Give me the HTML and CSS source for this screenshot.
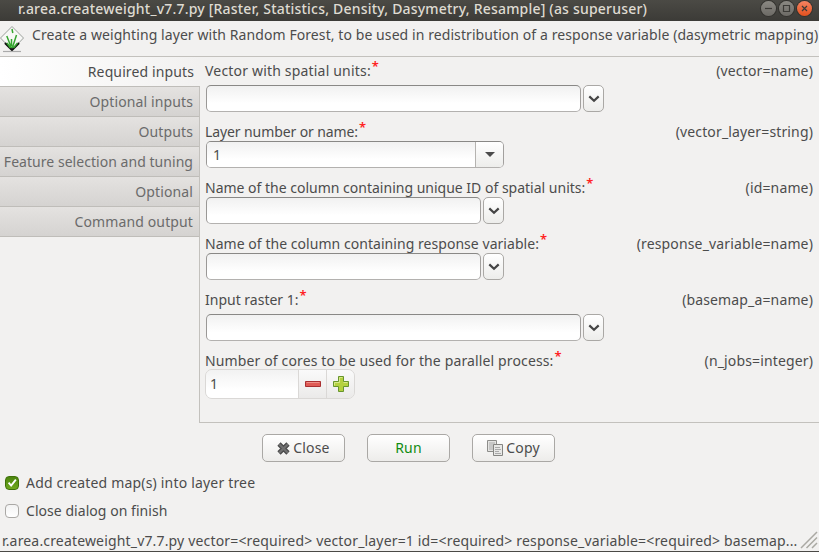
FILE: index.html
```html
<!DOCTYPE html>
<html lang="en">
<head>
<meta charset="utf-8">
<title>r.area.createweight</title>
<link rel="stylesheet" href="styles.css">
</head>
<body>
<svg width="0" height="0" class="defs">
  <symbol id="chevron" viewBox="0 0 12 8"><path d="M1.300 1.400 6 5.800l4.700-4.400" fill="none" stroke="#454545" stroke-width="2.200"/></symbol>
</svg>
<div class="window">
  <header class="titlebar">
    <span class="title">r.area.createweight_v7.7.py [Raster, Statistics, Density, Dasymetry, Resample] (as superuser)</span>
    <div class="controls">
      <span class="control"><svg viewBox="0 0 15 15"><path d="M4 7.500h7"/></svg></span>
      <span class="control"><svg viewBox="0 0 15 15"><path d="M4.500 4.500h6v6h-6z"/></svg></span>
      <span class="control control-close"><svg viewBox="0 0 15 15"><path d="m5 5 5 5m0-5-5 5"/></svg></span>
    </div>
  </header>
  <div class="description">
    <svg class="logo" viewBox="0 0 24 28">
      <path d="M12 1.500 23.500 13 12 25 .5 13z" fill="#f7f8f6" stroke="#9b9f9b"/>
      <path d="M5 18 12 25l7-7" fill="none" stroke="#111" stroke-width="2.200"/>
      <path d="M11.500 23 6.800 11M12.300 23 16.500 10M11.500 21v-7M10.500 23 7 18M13.500 23l4-5M12 4l.8 4" fill="none" stroke="#35a52f" stroke-width="1.500"/>
      <path d="M3 26.500h18" stroke="#aaa" stroke-width="1.200"/>
    </svg>
    <span class="summary">Create a weighting layer with Random Forest, to be used in redistribution of a response variable (dasymetric mapping)</span>
  </div>
  <div class="notebook">
    <nav class="tabs">
      <div class="tab tab-active">Required inputs</div>
      <div class="tab">Optional inputs</div>
      <div class="tab">Outputs</div>
      <div class="tab tab-long">Feature selection and tuning</div>
      <div class="tab">Optional</div>
      <div class="tab">Command output</div>
    </nav>
    <main class="page">
      <section class="field field-spaced">
        <div class="label-row"><label class="loose">Vector with spatial units:<b>*</b></label><span class="key">(vector=name)</span></div>
        <div class="input-row"><div class="entry entry-wide"></div><div class="drop"><svg><use href="#chevron"/></svg></div></div>
      </section>
      <section class="field">
        <div class="label-row"><label class="tight">Layer number or name:<b>*</b></label><span class="key">(vector_layer=string)</span></div>
        <div class="combo"><span class="combo-value">1</span><span class="combo-arrow"></span></div>
      </section>
      <section class="field">
        <div class="label-row"><label>Name of the column containing unique ID of spatial units:<b>*</b></label><span class="key">(id=name)</span></div>
        <div class="input-row"><div class="entry"></div><div class="drop"><svg><use href="#chevron"/></svg></div></div>
      </section>
      <section class="field">
        <div class="label-row"><label class="airy">Name of the column containing response variable:<b>*</b></label><span class="key">(response_variable=name)</span></div>
        <div class="input-row"><div class="entry"></div><div class="drop"><svg><use href="#chevron"/></svg></div></div>
      </section>
      <section class="field field-spaced">
        <div class="label-row"><label>Input raster 1:<b>*</b></label><span class="key">(basemap_a=name)</span></div>
        <div class="input-row"><div class="entry entry-wide"></div><div class="drop"><svg><use href="#chevron"/></svg></div></div>
      </section>
      <section class="field">
        <div class="label-row"><label class="wide">Number of cores to be used for the parallel process:<b>*</b></label><span class="key">(n_jobs=integer)</span></div>
        <div class="spin">
          <span class="spin-value">1</span>
          <span class="spin-button"><svg viewBox="0 0 16 16"><path d="M.5 5.500h15v5H.5z" fill="#df5b55" stroke="#a92f31"/><path d="M1.500 6.500h13" stroke="#ee918b"/></svg></span>
          <span class="spin-button"><svg viewBox="0 0 16 16"><path d="M5.500.5h5v5h5v5h-5v5h-5v-5h-5v-5h5z" fill="#b4d13f" stroke="#67952d"/><path d="M6.500 6.500v-5h3M1.500 9.500v-3h5m4 0h4" fill="none" stroke="#d8e98a"/></svg></span>
        </div>
      </section>
    </main>
  </div>
  <div class="actions">
    <button class="button"><svg class="icon-close" viewBox="0 0 13 13"><path d="m2 2 9 9m0-9-9 9" stroke="#4b4b4b" stroke-width="4.600"/><path d="m2.200 2.200 8.600 8.600m0-8.600-8.600 8.600" stroke="#707070" stroke-width="2.200"/></svg>Close</button>
    <button class="button button-run">Run</button>
    <button class="button"><svg class="icon-copy" viewBox="0 0 16 16"><path d="M.5.5h9v11h-9z" fill="#e4e4e2" stroke="#8d8d8a"/><path d="M2 3h6M2 5h6M2 7h4M2 9h4" stroke="#aaa"/><path d="M6.500 4.500h9v11h-9z" fill="#e8e8e6" stroke="#858582"/><path d="M8 7.500h5M8 9.500h6M8 11.500h4M8 13.500h6" stroke="#aaa"/></svg>Copy</button>
  </div>
  <div class="options">
    <div class="option"><span class="check check-on"><svg viewBox="0 0 14 14"><path d="m3 6.500 3 3.500 5.500-7" fill="none" stroke="#fff" stroke-width="2.200"/></svg></span><span class="loose">Add created map(s) into layer tree</span></div>
    <div class="option"><span class="check"></span><span class="airy">Close dialog on finish</span></div>
  </div>
  <footer class="status">
    <span class="command">r.area.createweight_v7.7.py vector=&lt;required&gt; vector_layer=1 id=&lt;required&gt; response_variable=&lt;required&gt; basemap...</span>
    <svg class="grip" viewBox="0 0 18 18"><path d="M1 17 17 1M6.500 17 17 6.500M12 17l5-5" stroke="#aaa9a3" stroke-width="1.500"/></svg>
  </footer>
</div>
</body>
</html>
```

FILE: styles.css
```css
* { box-sizing: border-box; }
body {
  margin: 0;
  background: #f2f1f0;
  color: #4c4c4c;
  font: 14px/20px "Noto Sans", "Open Sans", sans-serif;
}
.defs { display: block; }
.tight { letter-spacing: -.1px; }
.airy { letter-spacing: .045px; }
.wide { letter-spacing: .135px; }
.loose { letter-spacing: .185px; }
.window {
  display: flex;
  flex-direction: column;
  width: 819px;
  height: 552px;
  overflow: hidden;
  white-space: nowrap;
  border-bottom: 1px solid #4a4946;
}
.titlebar {
  display: flex;
  flex: none;
  justify-content: space-between;
  height: 21px;
  padding: 0 7px 0 18px;
  background: linear-gradient(#4b4a45, #3c3b37);
  color: #dfdbd2;
  line-height: 18px;
}
.title {
  font-weight: 500;
  letter-spacing: .2px;
}
.controls { display: flex; gap: 3px; padding-top: 1px; }
.control {
  width: 15px;
  height: 15px;
  border-radius: 50%;
  background: linear-gradient(#8b8983, #6c6a65);
  box-shadow: 0 0 0 1px #34332f;
}
.control svg { display: block; fill: none; stroke: #3c3b37; stroke-width: 1.200; }
.control-close { background: linear-gradient(#f58462, #e2501e); }
.description { display: flex; flex: none; height: 35px; padding-top: 4px; }
.logo { flex: none; width: 24px; height: 28px; margin-right: 8px; }
.summary { letter-spacing: .08px; }
.notebook {
  display: flex;
  flex: none;
  height: 367px;
  border-top: 1px solid #c3c1bd;
}
.tabs { flex: none; width: 200px; border-right: 1px solid #c3c1bd; }
.tab {
  height: 30px;
  padding: 5px 6px 0 0;
  border-bottom: 1px solid #bfbdb9;
  background: linear-gradient(#e4e2e0, #d5d3d1);
  color: #6b6b6b;
  letter-spacing: .12px;
  text-align: right;
}
.tab-long { letter-spacing: .04px; }
.tab-active {
  width: 200px;
  background: linear-gradient(90deg, #fff, #f2f1f0);
  color: #4c4c4c;
}
.page {
  display: flex;
  flex: 1;
  flex-direction: column;
  gap: 10px;
  padding: 4px 6px 0 5px;
  border-bottom: 1px solid #c3c1bd;
}
.label-row { display: flex; justify-content: space-between; height: 19px; }
.label-row b {
  margin-left: 1px;
  color: #f22;
  font-size: 13px;
  font-weight: 600;
  line-height: 0;
  vertical-align: 5px;
}
.key { letter-spacing: .14px; }
.field-spaced .label-row { margin-bottom: 5px; }
.input-row { display: flex; gap: 2px; padding-left: 1px; }
.entry, .drop, .combo, .button {
  border: 1px solid #aaa8a5;
  border-radius: 5px;
}
.entry {
  width: 275px;
  height: 27px;
  border-color: #898886 #a2a09e #b3b1af #9a9896;
  background: linear-gradient(#f1f1f1, #fff 70%);
}
.entry-wide { width: 375px; }
.drop {
  display: grid;
  place-items: center;
  width: 21px;
  height: 27px;
  background: linear-gradient(#fff, #ededeb);
}
.drop svg { width: 12px; height: 8px; }
.combo {
  display: flex;
  width: 298px;
  height: 27px;
  margin-left: 1px;
  overflow: hidden;
  border-color: #898886 #a2a09e #b3b1af #9a9896;
}
.combo-value {
  flex: 1;
  padding: 3px 6px;
  border-right: 1px solid #b5b3b0;
  background: linear-gradient(#f1f1f1, #fff 70%);
}
.combo-arrow {
  display: grid;
  place-items: center;
  width: 27px;
  background: linear-gradient(#fff, #ededeb);
}
.combo-arrow::before {
  content: "";
  border: 5px solid transparent;
  border-top-color: #4c4c4c;
  border-bottom: 0;
}
.spin {
  display: flex;
  width: 150px;
  height: 30px;
  margin-top: -1px;
  overflow: hidden;
  border: 1px solid #dad8d6;
  border-radius: 7px;
}
.spin-value { flex: 1; padding: 4px; background: linear-gradient(#f2f2f2, #fff 70%); }
.spin-button {
  display: grid;
  place-items: center;
  width: 28px;
  border-left: 1px solid #dad8d6;
  background: linear-gradient(#fafafa, #ebeae9);
}
.spin-button svg { width: 16px; height: 16px; }
.actions { display: flex; flex: none; gap: 22px; padding: 11px 0 0 262px; }
.button {
  display: flex;
  align-items: center;
  justify-content: center;
  gap: 3px;
  width: 83px;
  height: 28px;
  padding: 0;
  background: linear-gradient(#fff, #edecea);
  color: inherit;
  font: inherit;
  letter-spacing: .15px;
}
.button-run { color: #118c11; }
.icon-close { width: 13px; height: 13px; }
.icon-copy { width: 16px; height: 16px; }
.options { flex: none; padding: 11px 0 0 5px; }
.option { display: flex; align-items: center; gap: 7px; height: 20px; margin-bottom: 8px; }
.check {
  width: 14px;
  height: 14px;
  border: 1px solid #aaa8a5;
  border-radius: 4px;
  background: linear-gradient(#f3f3f3, #fff);
}
.check-on { border-color: #3f7209; background: linear-gradient(#4c850e, #70a91f); }
.check svg { display: block; width: 12px; height: 12px; }
.status {
  display: flex;
  justify-content: space-between;
  flex: 1;
  padding: 2px 1px 0 2px;
}
.command { letter-spacing: .165px; }
.grip { width: 18px; height: 18px; }
```
